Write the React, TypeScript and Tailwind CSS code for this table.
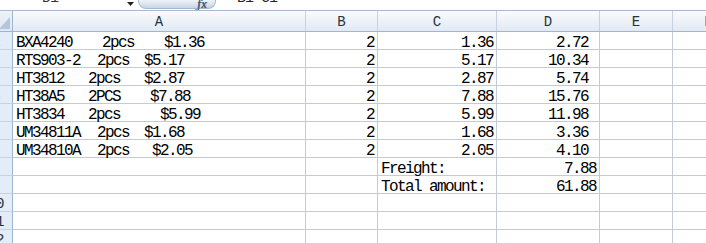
import React from "react";

type Row = {
  a?: { text: string; w: string }[];
  b?: string;
  c?: string;
  cLeft?: boolean;
  d?: string;
  dPad?: string;
};

const ROWS: Row[] = [
  { a: [{ text: "BXA4240", w: "w-[86px]" }, { text: "2pcs", w: "w-[62px]" }, { text: "$1.36", w: "" }], b: "2", c: "1.36", d: "2.72", dPad: "pr-[11px]" },
  { a: [{ text: "RTS903-2", w: "w-[81px]" }, { text: "2pcs", w: "w-[47px]" }, { text: "$5.17", w: "" }], b: "2", c: "5.17", d: "10.34", dPad: "pr-[11px]" },
  { a: [{ text: "HT3812", w: "w-[72px]" }, { text: "2pcs", w: "w-[56px]" }, { text: "$2.87", w: "" }], b: "2", c: "2.87", d: "5.74", dPad: "pr-[11px]" },
  { a: [{ text: "HT38A5", w: "w-[72px]" }, { text: "2PCS", w: "w-[62px]" }, { text: "$7.88", w: "" }], b: "2", c: "7.88", d: "15.76", dPad: "pr-[11px]" },
  { a: [{ text: "HT3834", w: "w-[72px]" }, { text: "2pcs", w: "w-[72px]" }, { text: "$5.99", w: "" }], b: "2", c: "5.99", d: "11.98", dPad: "pr-[11px]" },
  { a: [{ text: "UM34811A", w: "w-[81px]" }, { text: "2pcs", w: "w-[47px]" }, { text: "$1.68", w: "" }], b: "2", c: "1.68", d: "3.36", dPad: "pr-[11px]" },
  { a: [{ text: "UM34810A", w: "w-[81px]" }, { text: "2pcs", w: "w-[55px]" }, { text: "$2.05", w: "" }], b: "2", c: "2.05", d: "4.10", dPad: "pr-[11px]" },
  { c: "Freight:", cLeft: true, d: "7.88", dPad: "pr-[3px]" },
  { c: "Total amount:", cLeft: true, d: "61.88", dPad: "pr-[3px]" },
  {},
  {},
  {},
];

const COLS: [string, string][] = [
  ["A", "w-[293px]"],
  ["B", "w-[72px]"],
  ["C", "w-[119px]"],
  ["D", "w-[103px]"],
  ["E", "w-[73px]"],
  ["F", "w-[72px]"],
];

const txt = "font-mono text-[16px] leading-[16px] tracking-[-1.6px] text-black whitespace-pre";
const cell = `shrink-0 h-full border-r border-[#c4cbd6] pt-[3px] ${txt}`;

export default function App() {
  return (
    <div className="w-[706px] h-[243px] overflow-hidden bg-white">
      {/* formula bar, cut at the top */}
      <div className="h-[11px] border-b border-[#a7bad0] bg-white flex items-start overflow-hidden">
        <div className="w-[136px] shrink-0 flex items-start">
          <span className="font-mono text-[15px] leading-[16px] tracking-[-1px] text-[#333] -mt-[9px] ml-[42px]">D1</span>
          <svg className="ml-[69px] mt-[2px]" width="7" height="4" viewBox="0 0 7 4">
            <polygon points="0,0 7,0 3.5,4" fill="#222" />
          </svg>
        </div>
        <div className="w-[78px] shrink-0 h-[10px] -mt-[1px] ml-[2px] rounded-b-[8px] border border-t-0 border-[#a9b9cc] bg-gradient-to-b from-[#f4f7fb] to-[#c9d5e4] flex items-end justify-end pr-[8px]">
          <span className="font-serif italic font-bold text-[12px] leading-[12px] text-[#4a5a70] -mb-[2px]">fx</span>
        </div>
        <span className="font-mono text-[15px] leading-[16px] tracking-[-1px] text-[#222] -mt-[9px] ml-[13px]">=B1*C1</span>
      </div>

      {/* sheet, row headers cropped on the left */}
      <div className="-ml-[21px] w-[766px]">
        <div className="flex h-[21px] border-b border-[#9eb6ce]">
          <div className="w-[34px] shrink-0 border-r border-[#9eb6ce] bg-gradient-to-b from-[#eef3fa] to-[#dde6f2] flex items-end justify-end pr-[2px] pb-[2px]">
            <svg width="11" height="12" viewBox="0 0 11 12">
              <polygon points="11,0 11,12 0,12" fill="#b4c6dc" />
            </svg>
          </div>
          {COLS.map(([c, w]) => (
            <div
              key={c}
              className={`${w} shrink-0 border-r border-[#c5d2e2] bg-gradient-to-b from-[#f9fbfd] to-[#e1e9f4] flex items-end justify-center pb-[2px]`}
            >
              <span className="font-mono text-[14px] leading-[14px] text-[#27323f]">{c}</span>
            </div>
          ))}
        </div>

        {ROWS.map((r, i) => (
          <div key={i} className="flex h-[18px]">
            <div className="w-[34px] shrink-0 border-r border-b border-r-[#9eb6ce] border-b-[#c5d2e2] bg-[#e4ecf7] flex justify-center pt-[3px] font-mono text-[15px] leading-[16px] tracking-[-1px] text-[#27323f]">
              {i + 1}
            </div>
            <div className="flex-1 flex border-b border-[#c4cbd6]">
              <div className={`${cell} w-[293px] pl-[3px] flex`}>
                {r.a?.map((s, j) => (
                  <span key={j} className={`shrink-0 ${s.w}`}>
                    {s.text}
                  </span>
                ))}
              </div>
              <div className={`${cell} w-[72px] pr-[3px] text-right`}>{r.b}</div>
              <div className={`${cell} w-[119px] ${r.cLeft ? "pl-[3px] text-left" : "pr-[3px] text-right"}`}>{r.c}</div>
              <div className={`${cell} w-[103px] ${r.dPad ?? ""} text-right`}>{r.d}</div>
              <div className={`${cell} w-[73px]`} />
              <div className={`${cell} w-[72px]`} />
            </div>
          </div>
        ))}
      </div>
    </div>
  );
}
